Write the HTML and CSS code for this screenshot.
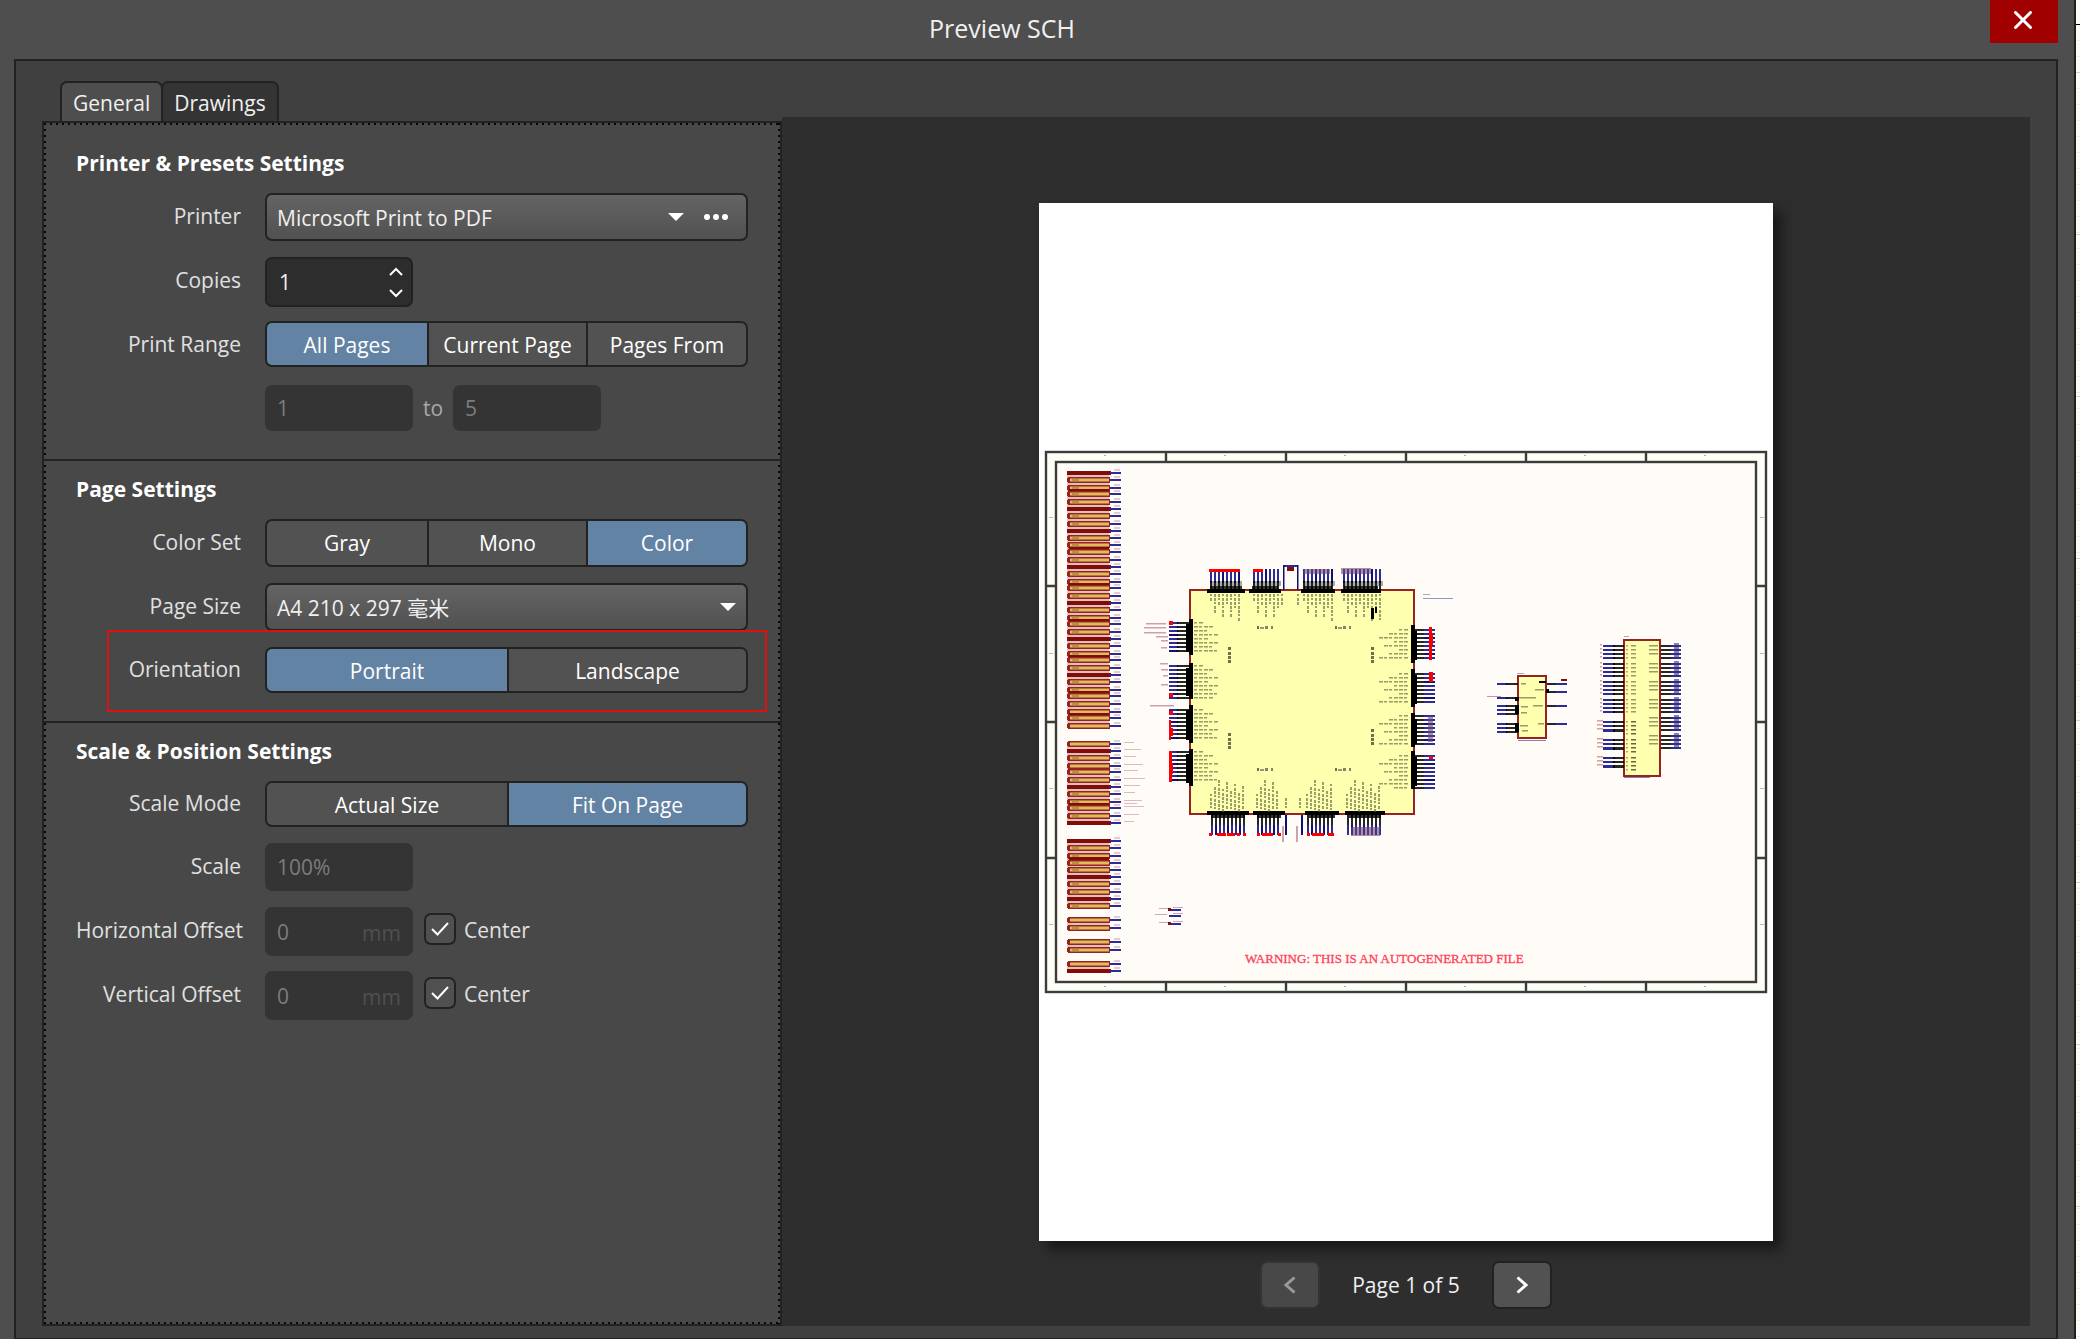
FILE: index.html
```
<!DOCTYPE html>
<html lang="en">
<head>
<meta charset="utf-8">
<title>Preview SCH</title>
<link rel="stylesheet" href="styles.css">
</head>
<body>
<div class="window">
  <header class="titlebar">
    <h1 class="title">Preview SCH</h1>
    <button class="close" type="button" aria-label="Close">
      <svg width="18" height="18" viewBox="0 0 18 18"><path d="M1.500 1.500L16.500 16.500M16.500 1.500L1.500 16.500" stroke="#fff" stroke-width="3" stroke-linecap="round"/></svg>
    </button>
  </header>

  <main class="frame">
    <section class="side">
      <div class="tabs" role="tablist">
        <button class="tab tab-active" type="button" role="tab" aria-selected="true">General</button>
        <button class="tab" type="button" role="tab" aria-selected="false">Drawings</button>
      </div>

      <form class="panel">
        <section class="group">
          <h2 class="heading">Printer &amp; Presets Settings</h2>
          <div class="row">
            <label class="label" for="printer">Printer</label>
            <div class="combo">
              <select class="select" id="printer"><option>Microsoft Print to PDF</option></select>
              <svg class="arrow" width="16" height="8" viewBox="0 0 16 8"><path d="M0 0H16L8 8Z" fill="#fff"/></svg>
              <button class="more" type="button" aria-label="Printer properties">
                <svg width="24" height="6" viewBox="0 0 24 6" fill="#fff"><circle cx="3" cy="3" r="3"/><circle cx="12" cy="3" r="3"/><circle cx="21" cy="3" r="3"/></svg>
              </button>
            </div>
          </div>
          <div class="row">
            <label class="label" for="copies">Copies</label>
            <div class="spin">
              <input class="spin-input" id="copies" type="text" value="1">
              <div class="spin-buttons">
                <button class="step" type="button" aria-label="More"><svg width="14" height="9" viewBox="0 0 14 9"><path d="M1 8L7 2L13 8" fill="none" stroke="#fff" stroke-width="2"/></svg></button>
                <button class="step" type="button" aria-label="Fewer"><svg width="14" height="9" viewBox="0 0 14 9"><path d="M1 1L7 7L13 1" fill="none" stroke="#fff" stroke-width="2"/></svg></button>
              </div>
            </div>
          </div>
          <div class="row">
            <span class="label" id="range-label">Print Range</span>
            <div class="segments thirds" role="radiogroup" aria-labelledby="range-label">
              <label class="segment"><input type="radio" name="range" checked>All Pages</label>
              <label class="segment"><input type="radio" name="range">Current Page</label>
              <label class="segment"><input type="radio" name="range">Pages From</label>
            </div>
          </div>
          <div class="row row-low">
            <span class="label"></span>
            <div class="inline">
              <input class="field" type="text" value="1" aria-label="First page" disabled>
              <label class="to" for="last-page">to</label>
              <input class="field" id="last-page" type="text" value="5" disabled>
            </div>
          </div>
        </section>

        <section class="group">
          <h2 class="heading">Page Settings</h2>
          <div class="row">
            <span class="label" id="color-label">Color Set</span>
            <div class="segments thirds tall" role="radiogroup" aria-labelledby="color-label">
              <label class="segment"><input type="radio" name="color">Gray</label>
              <label class="segment"><input type="radio" name="color">Mono</label>
              <label class="segment"><input type="radio" name="color" checked>Color</label>
            </div>
          </div>
          <div class="row">
            <label class="label" for="size">Page Size</label>
            <div class="combo">
              <select class="select" id="size"><option>A4 210 x 297 毫米</option></select>
              <svg class="arrow arrow-end" width="16" height="8" viewBox="0 0 16 8"><path d="M0 0H16L8 8Z" fill="#fff"/></svg>
            </div>
          </div>
          <div class="row row-short marked">
            <span class="label" id="orient-label">Orientation</span>
            <div class="segments halves" role="radiogroup" aria-labelledby="orient-label">
              <label class="segment"><input type="radio" name="orient" checked>Portrait</label>
              <label class="segment"><input type="radio" name="orient">Landscape</label>
            </div>
          </div>
        </section>

        <section class="group">
          <h2 class="heading">Scale &amp; Position Settings</h2>
          <div class="row row-short">
            <span class="label" id="mode-label">Scale Mode</span>
            <div class="segments halves" role="radiogroup" aria-labelledby="mode-label">
              <label class="segment"><input type="radio" name="mode">Actual Size</label>
              <label class="segment"><input type="radio" name="mode" checked>Fit On Page</label>
            </div>
          </div>
          <div class="row">
            <label class="label" for="scale">Scale</label>
            <div class="inline"><input class="field" id="scale" type="text" value="100%" disabled></div>
          </div>
          <div class="row">
            <label class="label" for="hoff">Horizontal Offset</label>
            <div class="inline">
              <div class="field unit-field"><input class="unit-input" id="hoff" type="text" value="0" disabled><span class="unit">mm</span></div>
              <label class="check"><span class="box"><input class="box-input" type="checkbox" checked><svg class="tick" width="18" height="14" viewBox="0 0 18 14"><path d="M1 7L6.500 12.500L17 1" fill="none" stroke="#fff" stroke-width="2"/></svg></span>Center</label>
            </div>
          </div>
          <div class="row">
            <label class="label" for="voff">Vertical Offset</label>
            <div class="inline">
              <div class="field unit-field"><input class="unit-input" id="voff" type="text" value="0" disabled><span class="unit">mm</span></div>
              <label class="check"><span class="box"><input class="box-input" type="checkbox" checked><svg class="tick" width="18" height="14" viewBox="0 0 18 14"><path d="M1 7L6.500 12.500L17 1" fill="none" stroke="#fff" stroke-width="2"/></svg></span>Center</label>
            </div>
          </div>
        </section>
      </form>
    </section>

    <section class="preview">
      <div class="paper">
        <svg class="sheet" viewBox="0 0 724 544" role="img" aria-label="Schematic sheet">
          <rect x="1" y="1" width="722" height="542" fill="#fbfff6"/>
          <rect x="12" y="12" width="700" height="520" fill="#fffcf7"/>
          <g fill="none" stroke="#3c3c3a" stroke-width="2.400">
            <rect x="2" y="2" width="720" height="540"/>
            <rect x="12" y="12" width="700" height="520"/>
            <path d="M122 2V12M242 2V12M362 2V12M482 2V12M602 2V12M122 532V542M242 532V542M362 532V542M482 532V542M602 532V542M2 136H12M2 272H12M2 408H12M712 136H722M712 272H722M712 408H722"/>
          </g>
          <g id="ports"></g>
          <g id="soc"></g>
          <g id="parts"></g>
          <text class="warning" x="201" y="513">WARNING: THIS IS AN AUTOGENERATED FILE</text>
        </svg>
      </div>
      <nav class="pager" aria-label="Pages">
        <button class="page-button" type="button" aria-label="Previous page" disabled><svg width="12" height="18" viewBox="0 0 12 18"><path d="M10.500 1.500L2 9L10.500 16.500" fill="none" stroke="#9a9a9a" stroke-width="3"/></svg></button>
        <span class="page-text">Page 1 of 5</span>
        <button class="page-button" type="button" aria-label="Next page"><svg width="12" height="18" viewBox="0 0 12 18"><path d="M1.500 1.500L10 9L1.500 16.500" fill="none" stroke="#fff" stroke-width="3"/></svg></button>
      </nav>
    </section>
  </main>
</div>
<div class="backdrop"></div>
<script src="schematic.js"></script>
</body>
</html>
```

FILE: styles.css
```
* { box-sizing: border-box; }

body {
  margin: 0;
  display: flex;
  min-height: 100vh;
  background: #fffcf8;
  color: #f0f0f0;
  font: 21px/28px "Open Sans", "Noto Sans CJK SC", sans-serif;
}

button, input, select { font: inherit; color: inherit; margin: 0; }
button { padding: 0; border: 0; background: none; }

.window {
  flex: 1;
  display: flex;
  flex-direction: column;
  background: #4e4e4e;
  border-right: 2px solid #1e2020;
}

/* sliver of the editor sheet behind the dialog */
.backdrop {
  width: 4px;
  background:
    linear-gradient(#000, #000) 0 24px / 4px 1px no-repeat,
    linear-gradient(#fffcf8, #fffcf8) 0 0 / 4px 40px no-repeat,
    repeating-linear-gradient(transparent 0 72px, #d4d2d0 72px 73px, transparent 73px 162px),
    repeating-linear-gradient(#fffcf8 0 8px, #efece9 8px 9px, #fffcf8 9px 16px);
}

.titlebar {
  display: grid;
  grid-template-columns: 1fr 68px;
  height: 59px;
  padding: 0 16px 0 14px;
}
.title {
  margin: 0;
  padding-top: 14px;
  font-size: 25px;
  font-weight: 400;
  text-align: center;
}
.close {
  display: flex;
  align-items: center;
  justify-content: center;
  height: 43px;
  padding: 0 2px 3px 0;
  background: #a00000;
}

.frame {
  flex: 1;
  display: flex;
  margin: 0 16px 0 14px;
  padding: 20px 26px 12px;
  background: #404040;
  border: 2px solid #222;
  border-bottom-width: 1px;
}

.side {
  flex: 0 0 740px;
  display: flex;
  flex-direction: column;
}
.tabs { display: flex; padding-left: 18px; }
.tab {
  height: 40px;
  padding: 2px 11px 0;
  border: 2px solid #222;
  border-bottom: 0;
  border-radius: 7px 7px 0 0;
  background: #343434;
}
.tab-active { background: #4e4e4e; }
.tab + .tab { margin-left: -2px; }

/* the dotted focus frame runs just inside the border */
.panel {
  flex: 1;
  background:
    repeating-linear-gradient(90deg, #080808 0 2px, transparent 2px 6px) 0 0 / 100% 2px no-repeat,
    repeating-linear-gradient(90deg, #080808 0 2px, transparent 2px 6px) 0 100% / 100% 2px no-repeat,
    repeating-linear-gradient(#080808 0 2px, transparent 2px 6px) 0 0 / 2px 100% no-repeat,
    repeating-linear-gradient(#080808 0 2px, transparent 2px 6px) 100% 0 / 2px 100% no-repeat,
    #484848;
  border: 2px solid #222;
}
.group { padding: 26px 32px 30px; }
.group + .group { padding-top: 14px; padding-bottom: 28px; border-top: 2px solid #222; }
.heading {
  margin: 0 0 16px;
  font-size: 21px;
  line-height: 28px;
  font-weight: 700;
  color: #fff;
}
.row {
  display: grid;
  grid-template-columns: 165px 483px;
  column-gap: 24px;
  height: 48px;
  line-height: 46px;
}
.row + .row { margin-top: 16px; }
.row-short { height: 46px; line-height: 44px; }
.row-low { height: 44px; }
.label { text-align: right; color: #e0e0e0; white-space: nowrap; }

/* red call-out round the orientation row */
.marked { position: relative; }
.marked::after {
  content: "";
  position: absolute;
  inset: -17px -19px -19px 31px;
  border: 2px solid #e01010;
  pointer-events: none;
}

.combo {
  display: grid;
  grid-template-columns: 1fr 16px 62px;
  align-items: center;
  border: 2px solid #222;
  border-radius: 7px;
  background: linear-gradient(#646464, #515151);
}
.select {
  grid-area: 1 / 1 / 2 / 4;
  height: 44px;
  padding: 0 10px;
  border: 0;
  background: none;
  appearance: none;
}
.arrow { grid-area: 1 / 2; pointer-events: none; }
.arrow-end { grid-area: 1 / 3; margin-left: 36px; }
.more {
  grid-area: 1 / 3;
  display: flex;
  align-items: center;
  padding-left: 20px;
  height: 44px;
}

.spin {
  display: flex;
  width: 148px;
  border: 2px solid #222;
  border-radius: 7px;
  background: #2d2d2d;
}
.spin-input {
  width: 100px;
  padding: 0 12px;
  border: 0;
  background: none;
}
.spin-buttons { flex: 1; display: flex; flex-direction: column; padding: 1px 0; }
.step { flex: 1; display: flex; align-items: center; justify-content: center; padding-left: 14px; }

.segments {
  display: grid;
  gap: 2px;
  height: 46px;
  line-height: 44px;
  border: 2px solid #222;
  border-radius: 7px;
  background: #222;
  overflow: hidden;
}
.tall { height: 48px; }
.thirds { grid-template-columns: 160px 1fr 158px; }
.halves { grid-template-columns: 240px 1fr; }
.segment {
  background: #525252;
  text-align: center;
  color: #fff;
}
.segment input { appearance: none; width: 0; height: 0; margin: 0; position: absolute; }
.segment:has(:checked) { background: #6283a3; }

.inline { display: flex; }
.field {
  width: 148px;
  padding: 0 12px;
  border: 0;
  border-radius: 7px;
  background: #343434;
  color: #7c7c7c;
}
.to { width: 40px; text-align: center; color: #a8a8a8; }
.unit-field { display: flex; }
.unit-input { width: 70px; padding: 0; border: 0; background: none; color: #7c7c7c; }
.unit { flex: 1; padding-top: 3px; text-align: right; color: #505050; }
.check { display: flex; margin-left: 11px; gap: 8px; color: #e0e0e0; }
.box { display: grid; place-items: center; width: 32px; height: 32px; margin-top: 6px; }
.box-input {
  grid-area: 1 / 1;
  appearance: none;
  width: 32px;
  height: 32px;
  border: 2px solid #222;
  border-radius: 7px;
  background: #505050;
}
.tick { grid-area: 1 / 1; pointer-events: none; position: relative; }

.preview {
  flex: 1;
  display: flex;
  flex-direction: column;
  align-items: center;
  margin-top: 36px;
  padding-top: 86px;
  background: #2e2e2e;
}
.paper {
  display: flex;
  align-items: center;
  width: 734px;
  max-width: 90%;
  aspect-ratio: 734 / 1038;
  padding: 0 5px;
  background: #fff;
  box-shadow: 8px 8px 12px rgba(0, 0, 0, .5);
}
.sheet { width: 100%; display: block; }
.warning { font: 13px "Liberation Serif", serif; fill: #ff4058; stroke: #ff4058; stroke-width: .3px; }

.pager { display: flex; align-items: center; gap: 32px; margin-top: 20px; }
.page-button {
  display: flex;
  align-items: center;
  justify-content: center;
  width: 60px;
  height: 48px;
  border: 2px solid #222;
  border-radius: 7px;
  background: #525252;
}
.page-button:disabled { background: #484848; border-color: #333; }
```

FILE: schematic.js
```
// Draws the symbols, pins and ports of the schematic thumbnail.
const NS = "http://www.w3.org/2000/svg";

function rect(layer, x, y, w, h, fill, opacity) {
  const node = document.createElementNS(NS, "rect");
  node.setAttribute("x", x);
  node.setAttribute("y", y);
  node.setAttribute("width", w);
  node.setAttribute("height", h);
  node.setAttribute("fill", fill);
  if (opacity) node.setAttribute("opacity", opacity);
  layer.appendChild(node);
}

const BLUE = "#2b2b9a", NAVY = "#101070", BLACK = "#000", RED = "#ff0000", MAROON = "#850a0a", RUST = "#982222", CREAM = "#ffffb0";

// Port column on the left: b = filled bar, all others are boxes.
const ports = document.getElementById("ports");
const columns = [
  "23b 30 38 41b 44 52 59b 66 74 81b 88 95 99b 102 110 117b 124 132 135b 138 146 153b 160 168 171b 174 182 189b 196 204 207b 210 218 225b 232 240 243b 246 254 262 265b 268 276",
  "294 301b 308 316 322 330 337b 344 352 355b 358 366 373b",
  "391b 398 406 409b 413 420 427b 434 442 449b 456",
  "470 478",
  "492 500",
  "514 521b"
];
columns.forEach((column, c) => {
  const items = column.split(" ");
  const first = parseInt(items[0]), last = parseInt(items[items.length - 1]);
  rect(ports, 23, first - 2, 42, last - first + 4, "#dcc2bd");
  items.forEach((item, i) => {
    const y = parseInt(item);
    const next = parseInt(items[i + 1]) || 999, prev = parseInt(items[i - 1]) || 0;
    if (item.endsWith("b")) {
      // a bar squeezed between two boxes is the overlap of their outlines
      const overlap = next - y < 5 || y - prev < 5;
      rect(ports, overlap ? 25 : 23, y - 2, overlap ? 40 : 44, 4, MAROON);
    } else {
      rect(ports, 23, y - 2, 2, 4, RUST);
      rect(ports, 24, y - 3, 42, 6, RUST);
      rect(ports, 26, y - 1.5, 39, 3, "#dfbd5c");
      if (i % 3) rect(ports, 28, y - 1, 7, 2, "#8a6a30", 0.5);
    }
    const near = next - y < 5 && item.endsWith("b");
    if (!near) {
      rect(ports, 66, y - 1, 11, 2, BLUE);
      rect(ports, 70, y - 4, 6, 2, "#a06080", 0.3);
    }
    if (c === 1) rect(ports, 80, y - 2, 10 + (i * 7) % 12, 1, "#b06a80", 0.45);
  });
});

// Main controller, pins on all four sides.
const soc = document.getElementById("soc");
rect(soc, 145, 139, 226, 226, RUST);
rect(soc, 147, 141, 222, 222, CREAM);

// Pin names too small to read: broken strokes, upright or flat.
function upright(x, y, len, seed) {
  for (let d = 0; d < len; d += 4) rect(soc, x, y + d, 2, (d + seed) % 3 ? 3 : 2, "#55603c", 0.6);
}
function flat(x, y, len, seed) {
  for (let d = 0; d < len; d += 5) rect(soc, x + d, y, (d + seed) % 3 ? 4 : 3, 1.5, "#55583a", 0.6);
}

function topPins(bar, barEnd, from, to) {
  rect(soc, bar, 139, barEnd - bar, 4, BLACK);
  rect(soc, bar + 3, 136, barEnd - bar - 6, 3, BLACK, 0.8);
  for (let x = from, i = 0; x <= to; x += 4, i++) {
    rect(soc, x, 119, 2, 14, i % 4 === 3 ? NAVY : BLUE);
    rect(soc, x, 131, 2, 9, BLACK, 0.85);
    rect(soc, x + 2, 131, 2, 5, "#555", 0.5);
    upright(x, 144, 8 + (i * 11) % 20, i);
  }
}
topPins(163, 201, 166, 196);
topPins(205, 237, 209, 233);
topPins(257, 291, 259, 287);
topPins(297, 337, 299, 335);
rect(soc, 165, 119, 31, 3, RED);
rect(soc, 209, 119, 10, 3, RED);
rect(soc, 239, 115, 15, 2, BLUE);
rect(soc, 239, 115, 1.5, 25, NAVY);
rect(soc, 253, 115, 1.5, 25, NAVY);
rect(soc, 243, 117, 7, 4, MAROON);
upright(237, 144, 9, 0);
upright(253, 144, 9, 0);
rect(soc, 260, 119, 26, 5, "#704878", 0.6);
rect(soc, 297, 118, 30, 6, "#704878", 0.6);
rect(soc, 327, 158, 3, 11, BLACK);
rect(soc, 331, 157, 2, 6, BLACK);

function bottomPins(bar, barEnd, from, to) {
  rect(soc, bar, 361, barEnd - bar, 4, BLACK);
  rect(soc, bar + 4, 365, barEnd - bar - 8, 3, BLACK, 0.8);
  for (let x = from, i = 0; x <= to; x += 4, i++) {
    rect(soc, x, 365, 2, 12, BLACK, 0.85);
    rect(soc, x, 375, 2, 10, i % 3 === 1 ? NAVY : BLUE);
    const len = 16 + (i * 7) % 16;
    upright(x - 1, 360 - len, len, i);
  }
}
bottomPins(163, 205, 167, 201);
bottomPins(209, 241, 213, 236);
bottomPins(261, 295, 263, 290);
bottomPins(301, 341, 303, 336);
rect(soc, 241, 365, 2, 20, NAVY);
rect(soc, 257, 365, 2, 20, NAVY);
upright(241, 348, 10, 1);
upright(255, 348, 10, 1);
rect(soc, 238, 376, 2, 16, "#905070", 0.5);
rect(soc, 252, 376, 2, 16, "#905070", 0.5);
rect(soc, 307, 377, 29, 9, "#704878", 0.6);
[[165, 3], [173, 9], [183, 8], [193, 3], [199, 3], [213, 3], [218, 11], [234, 3], [263, 3], [268, 12], [284, 6]].forEach(([x, w]) => rect(soc, x, 383, w, 3, RED));

function leftPins(bar, barEnd, from, to) {
  rect(soc, 145, bar, 4, barEnd - bar, BLACK);
  rect(soc, 142, bar + 5, 3, barEnd - bar - 8, BLACK);
  for (let y = from, i = 0; y <= to; y += 4, i++) {
    rect(soc, 125, y, 9, 2, i % 4 === 3 ? NAVY : BLUE);
    rect(soc, 133, y, 13, 2, BLACK, 0.85);
    flat(150, y, 10 + (i * 9) % 16, i);
  }
}
leftPins(169, 205, 172, 202);
leftPins(213, 249, 215, 247);
leftPins(255, 293, 259, 289);
leftPins(299, 336, 301, 332);
rect(soc, 125, 171, 4, 4, RED);
rect(soc, 125, 243, 4, 4, RED);
rect(soc, 125, 261, 4, 4, RED);
rect(soc, 125, 270, 2, 20, RED);
rect(soc, 125, 278, 4, 8, RED);
rect(soc, 125, 301, 3, 31, RED);
rect(soc, 126, 313, 3, 11, RED);
[[102, 173, 20], [100, 177, 22], [100, 182, 22], [112, 186, 12], [117, 190, 7], [117, 197, 6], [116, 213, 8], [117, 219, 7], [119, 225, 5], [117, 234, 7], [106, 255, 24]].forEach(([x, y, w]) => rect(soc, x, y, w, 1.5, "#a85070", 0.55));

function rightPins(bar, barEnd, from, to) {
  rect(soc, 367, bar, 4, barEnd - bar, BLACK);
  rect(soc, 371, bar + 6, 2, barEnd - bar - 9, BLACK);
  for (let y = from, i = 0; y <= to; y += 4, i++) {
    rect(soc, 371, y, 12, 2, BLACK, 0.85);
    rect(soc, 380, y, 11, 2, i % 4 === 2 ? NAVY : BLUE);
    const len = 10 + (i * 10) % 25;
    flat(365 - len, y, len, i);
  }
}
rightPins(175, 213, 179, 209);
rightPins(219, 257, 223, 253);
rightPins(263, 297, 265, 293);
rightPins(301, 339, 305, 337);
rect(soc, 385, 177, 3, 33, RED);
rect(soc, 386, 183, 3, 12, RED);
rect(soc, 385, 222, 4, 10, RED);
rect(soc, 385, 306, 4, 3, RED);
rect(soc, 384, 266, 5, 26, "#704878", 0.6);

// Bank names inside the body.
[[213, 177], [291, 177], [213, 319], [291, 319]].forEach(([x, y]) => {
  rect(soc, x, y - 1, 2, 3, "#333", 0.7);
  rect(soc, x + 3, y, 4, 2, "#333", 0.5);
  rect(soc, x + 8, y - 1, 3, 3, "#333", 0.6);
  rect(soc, x + 14, y - 1, 2, 3, "#333", 0.6);
});
[[184, 197], [327, 197], [184, 283], [327, 279]].forEach(([x, y]) => {
  [0, 5, 9, 13].forEach(d => rect(soc, x, y + d, 3, 3, "#4a4c30", 0.8));
});
rect(soc, 379, 144, 7, 1, "#5050a0", 0.5);
rect(soc, 379, 148, 30, 1, "#5050a0", 0.6);

// Smaller parts on the right, and the loose nets at the bottom left.
const parts = document.getElementById("parts");
function body(x, y, w, h) {
  rect(parts, x, y, w, h, RUST);
  rect(parts, x + 2, y + 2, w - 4, h - 4, CREAM);
}
body(473, 225, 30, 64);
[233, 247, 255, 259, 263, 273, 277, 281].forEach(y => {
  rect(parts, 453, y, 10, 2, BLUE);
  rect(parts, 462, y, 12, 2, BLACK, 0.85);
});
[[471, 247, 4, 4], [471, 255, 4, 9], [471, 273, 4, 9], [495, 231, 7, 2], [502, 239, 3, 4]].forEach(r => rect(parts, ...r, BLACK));
[233, 241, 255, 273].forEach(y => {
  rect(parts, 503, y, 12, 2, BLACK, 0.85);
  rect(parts, 512, y, 11, 2, BLUE);
});
rect(parts, 517, 229, 6, 2, MAROON);
rect(parts, 443, 246, 14, 1, "#a85070", 0.6);
[[477, 233, 5], [475, 247, 17], [477, 256, 7], [477, 262, 6], [476, 275, 8], [478, 280, 6], [491, 239, 9], [489, 255, 10], [494, 273, 6]].forEach(([x, y, w]) => rect(parts, x, y, w, 1.5, "#55583a", 0.6));
rect(parts, 473, 223, 7, 1, "#5050a0", 0.5);
rect(parts, 474, 290, 28, 1, "#303080", 0.6);

body(579, 189, 38, 138);
for (let g = 0; g < 7; g++) {
  for (let i = 0; i < 4; i++) {
    const y = 195 + g * 18 + i * 4 + (g > 3 ? 4 : 0);
    if (g < 4 || i < 3) {
      const bold = g > 3 && i === 2;
      rect(parts, 559, y, 12, bold ? 3 : 2, BLUE);
      rect(parts, 569, y, 11, bold ? 3 : 2, BLACK, 0.85);
      rect(parts, g > 3 ? 553 : 556, y - 1, g > 3 ? 6 : 2, 1.5, "#c06050", 0.6);
    }
    rect(parts, 582, y, 2, 1.5, "#55583a", 0.5);
    rect(parts, 587, y, 5, 1.5, "#55583a", g > 3 ? 0.9 : 0.6);
    if (g < 6) {
      const ry = 195 + g * 18 + i * 4;
      rect(parts, 617, ry, 12, 2, BLACK, 0.85);
      rect(parts, 627, ry, 10, 2, BLUE);
      rect(parts, 630, ry - 2, 5, 3, "#403070", 0.6);
      if (i < 3) rect(parts, 605, ry, 9, 1.5, "#55583a", 0.6);
    }
  }
}
rect(parts, 580, 186, 5, 1, "#5050a0", 0.5);
rect(parts, 580, 327, 26, 1, "#303080", 0.6);

[459, 465, 473].forEach((y, i) => {
  rect(parts, 125, y, 12, 2, BLUE);
  rect(parts, 111 + (i % 2 ? 0 : 4), y - 1, 12, 1, "#b06a80", 0.6);
  rect(parts, 129, y - 2, 10, 1, "#b06a80", 0.6);
  if (i !== 1) rect(parts, 124, y - 1, 3, 3, MAROON);
});

// Zone marks along the sheet border.
[60, 180, 300, 420, 540, 660].forEach(x => [5, 536].forEach(y => rect(parts, x, y, 2, 1, "#a080a0", 0.7)));
[67, 203, 338, 474].forEach(y => [5, 716].forEach(x => rect(parts, x, y, 4, 1, "#90a0a0", 0.7)));
```
